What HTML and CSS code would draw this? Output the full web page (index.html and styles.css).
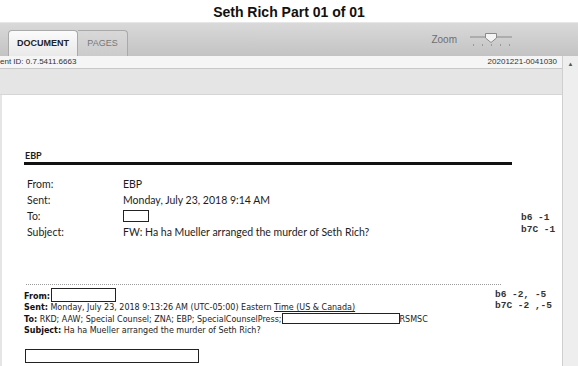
FILE: index.html
```html
<!DOCTYPE html>
<html lang="en">
  <head>
    <meta charset="UTF-8" />
    <meta name="viewport" content="width=device-width, initial-scale=1.0" />
    <link rel="stylesheet" href="styles.css">
    <title>Seth Rich Part 01 of 01</title>
  </head>
  <body>
    <h1 class="title">Seth Rich Part 01 of 01</h1>

    <div class="toolbar">
      <div class="tabs">
        <div class="tab active">DOCUMENT</div>
        <div class="tab">PAGES</div>
      </div>
      <div class="zoom">
        <span>Zoom</span>
        <svg width="46" height="16" viewBox="0 0 46 16">
          <line x1="2" y1="5" x2="44" y2="5" stroke="#8a8a8a" stroke-width="1" />
          <path d="M17.5 1.5 H28.5 V6 L23 10.5 L17.5 6 Z" fill="#f4f4f4" stroke="#8a8a8a" stroke-width="1" />
          <g fill="#999">
            <rect x="5" y="12" width="1" height="2" />
            <rect x="14" y="12" width="1" height="2" />
            <rect x="23" y="12" width="1" height="2" />
            <rect x="32" y="12" width="1" height="2" />
            <rect x="41" y="12" width="1" height="2" />
          </g>
        </svg>
      </div>
    </div>

    <div class="viewer">
      <div class="main">
        <div class="infobar">
          <span>ent ID: 0.7.5411.6663</span>
          <span>20201221-0041030</span>
        </div>
        <div class="band"></div>

        <div class="page">
          <div class="mail-head">EBP</div>
          <div class="heavy-rule"></div>

          <div class="section">
            <table class="fields">
              <tr><td>From:</td><td>EBP</td></tr>
              <tr><td>Sent:</td><td>Monday, July 23, 2018 9:14 AM</td></tr>
              <tr><td>To:</td><td><span class="redact small"></span></td></tr>
              <tr><td>Subject:</td><td>FW: Ha ha Mueller arranged the murder of Seth Rich?</td></tr>
            </table>
            <div class="notes notes-one">b6 -1<br>b7C -1</div>
          </div>

          <div class="dotted-rule"></div>

          <div class="section">
            <div class="fwd">
              <div><b>From:</b><span class="redact from"></span></div>
              <div><b>Sent:</b> Monday, July 23, 2018 9:13:26 AM (UTC-05:00) Eastern <u>Time (US &amp; Canada)</u></div>
              <div><b>To:</b> RKD; AAW; Special Counsel; ZNA; EBP; SpecialCounselPress;<span class="redact press"></span>RSMSC</div>
              <div><b>Subject:</b> Ha ha Mueller arranged the murder of Seth Rich?</div>
            </div>
            <div class="notes notes-two">b6 -2, -5<br>b7C -2 ,-5</div>
          </div>

          <div class="redact body-box"></div>
        </div>
      </div>
      <div class="scrollbar">&#9650;</div>
    </div>
  </body>
</html>
```

FILE: styles.css
```css
/* Basic */
html,
body {
  margin: 0;
  padding: 0;
  height: 100%;
  overflow: hidden;
}
body {
  font-family: "Liberation Sans", Arial, sans-serif;
  background: #fff;
  display: flex;
  flex-direction: column;
}

.title {
  margin: 0;
  height: 22px;
  line-height: 24px;
  font-size: 14px;
  font-weight: 700;
  text-align: center;
  color: #111;
}

/* Toolbar */
.toolbar {
  height: 34px;
  box-sizing: border-box;
  border-top: 1px solid #e6e6e6;
  background: linear-gradient(#d9d9d9, #c3c3c3);
  display: flex;
  justify-content: space-between;
  align-items: flex-end;
  padding: 0 0 0 8px;
}
.tabs {
  display: flex;
}
.tab {
  height: 26px;
  box-sizing: border-box;
  width: 50px;
  text-align: center;
  line-height: 25px;
  font-size: 9px;
  color: #777;
  border: 1px solid #a9a9a9;
  border-bottom: 0;
  border-left: 0;
  border-radius: 0 4px 0 0;
  background: linear-gradient(#d8d8d8, #cbcbcb);
}
.tab.active {
  width: 70px;
  font-weight: 700;
  color: #222;
  border-left: 1px solid #a9a9a9;
  border-radius: 4px 4px 0 0;
  background: linear-gradient(#fbfbfb, #e9e9e9);
}
.zoom {
  display: flex;
  align-items: center;
  gap: 11px;
  height: 34px;
  padding-right: 64px;
  font-size: 10px;
  color: #6e6e6e;
}
.zoom svg {
  display: block;
  margin-top: 2px;
}

/* Viewer */
.viewer {
  flex: 1;
  display: flex;
  min-height: 0;
}
.main {
  flex: 1;
  display: flex;
  flex-direction: column;
  overflow: hidden;
}
.infobar {
  height: 13px;
  box-sizing: border-box;
  display: flex;
  justify-content: space-between;
  padding-right: 5px;
  font-size: 8px;
  line-height: 12px;
  color: #333;
  background: #f5f5f5;
  border-bottom: 1px solid #c8c8c8;
  white-space: nowrap;
}
.band {
  height: 25px;
  background: #e5e5e5;
  border-bottom: 1px solid #d6d6d6;
}
.scrollbar {
  width: 15px;
  background: #eeeeee;
  border-left: 1px solid #cfcfcf;
  font-size: 6px;
  color: #555;
  text-align: center;
  line-height: 16px;
}

/* Page */
.page {
  flex: 1;
  background: #fff;
  border-left: 2px solid #e5e5e5;
  padding: 55px 50px 0 22px;
  font-family: Lato, "Liberation Sans", sans-serif;
  color: #1c1c1c;
}
.mail-head {
  font-size: 9px;
  font-weight: 700;
  line-height: 12px;
  margin-left: 1px;
}
.heavy-rule {
  height: 3px;
  background: #111;
}
.section {
  display: flex;
  justify-content: space-between;
}
.fields {
  border-collapse: collapse;
  margin: 11px 0 0 3px;
  font-size: 10.5px;
}
.fields td {
  padding: 0;
  height: 16px;
  line-height: 16px;
  vertical-align: middle;
}
.fields td:first-child {
  width: 96px;
}
.notes {
  font-family: "Liberation Mono", "Courier New", monospace;
  font-weight: 700;
  font-size: 9.5px;
  color: #333;
  white-space: nowrap;
}
.notes-one {
  margin: 47px -59px 0 0;
  width: 50px;
  line-height: 12px;
}
.notes-two {
  margin: 4px -45px 0 0;
  width: 62px;
  line-height: 11px;
}
.dotted-rule {
  margin: 44px 11px 0 2px;
  border-top: 1px dotted #9a9a9a;
}
.fwd {
  margin-top: 3px;
  font-family: "DejaVu Sans", sans-serif;
  font-size: 8px;
  line-height: 11px;
  color: #222;
  white-space: nowrap;
}
.fwd b {
  color: #111;
}
.redact {
  display: inline-block;
  box-sizing: border-box;
  border: 1.5px solid #222;
  background: #fff;
}
.redact.small {
  width: 26px;
  height: 12px;
  vertical-align: -2px;
}
.redact.from {
  width: 65px;
  height: 14px;
  vertical-align: -3px;
  margin-left: 1px;
}
.redact.press {
  width: 118px;
  height: 11px;
  vertical-align: -2px;
}
.body-box {
  display: block;
  width: 174px;
  height: 14px;
  margin: 13px 0 0 1px;
}
```
